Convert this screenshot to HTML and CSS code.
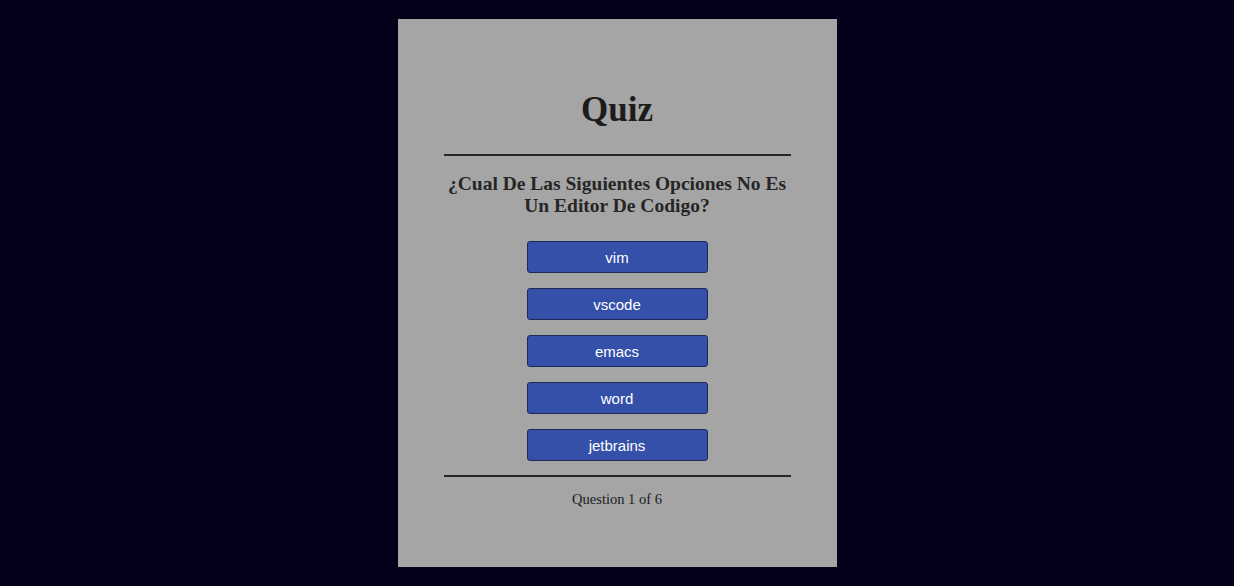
FILE: index.html
```html
<!DOCTYPE html>
<html>
<head>
<meta charset="utf-8">
<link rel="stylesheet" href="styles.css">
</head>
<body>
<div class="card">
  <h1 class="title">Quiz</h1>
  <hr class="rule">
  <h2 class="question">¿Cual De Las Siguientes Opciones No Es Un Editor De Codigo?</h2>
  <div class="options">
    <button class="option">vim</button>
    <button class="option">vscode</button>
    <button class="option">emacs</button>
    <button class="option">word</button>
    <button class="option">jetbrains</button>
  </div>
  <hr class="rule">
  <p class="progress">Question 1 of 6</p>
</div>
</body>
</html>
```
FILE: styles.css
```css
html, body {
  margin: 0;
  padding: 0;
}
body {
  background: #03021a;
  font-family: "Liberation Serif", "Times New Roman", serif;
  height: 586px;
  overflow: hidden;
}
.card {
  width: 439px;
  height: 548px;
  margin: 19px auto 0;
  padding: 71px 46px 0;
  box-sizing: border-box;
  background: #a5a5a5;
  color: #1c1c1c;
  display: flex;
  flex-direction: column;
  align-items: center;
}
.title {
  margin: 0;
  font-size: 35px;
  line-height: 40px;
  font-weight: bold;
}
.rule {
  align-self: stretch;
  margin: 24px 0 0;
  border: 0;
  height: 2px;
  background: #262626;
}
.question {
  margin: 17px 0 0;
  font-size: 19.5px;
  line-height: 22px;
  font-weight: bold;
  text-align: center;
  color: #262626;
}
.options {
  margin-top: 24px;
  display: flex;
  flex-direction: column;
  gap: 15px;
  align-items: center;
}
.option {
  width: 181px;
  height: 32px;
  background: #3450a9;
  border: 1px solid #1e2a55;
  border-radius: 3px;
  color: #ffffff;
  font-family: "Liberation Sans", Arial, sans-serif;
  font-size: 15px;
  padding: 0;
}
.options + .rule {
  margin-top: 14px;
}
.progress {
  margin: 13px 0 0;
  font-size: 14.5px;
  line-height: 18px;
  color: #1c1c1c;
}
```
